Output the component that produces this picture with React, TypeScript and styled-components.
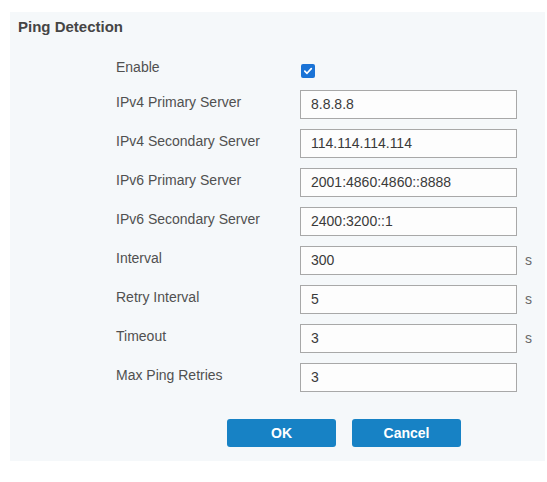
import React from 'react'
import styled, { createGlobalStyle } from 'styled-components'

const GlobalStyle = createGlobalStyle`
  body {
    margin      : 0;
    background  : #ffffff;
    font-family : "Liberation Sans", Arial, sans-serif;
  }
`

const Panel = styled.div`
  margin     : 12px 2px 0 10px;
  width      : 535px;
  background : #f5f8fa;
  padding    : 5px 0 14px 0;
  box-sizing : border-box;
`

const Title = styled.div`
  padding     : 0 8px;
  font-size   : 15px;
  line-height : 20px;
  font-weight : bold;
  color       : #454545;
`

const Form = styled.div`
  display        : flex;
  flex-direction : column;
  gap            : 10px;
  padding        : 18px 0 0 106px;
`

const Row = styled.div<{ $tall?: boolean }>`
  display     : flex;
  align-items : flex-start;
  height      : ${ (p) => (p.$tall ? '25px' : '29px') };
`

const Label = styled.div`
  width       : 184px;
  padding-top : 2px;
  font-size   : 14px;
  line-height : 20px;
  color       : #505050;
`

const Field = styled.div`
  width      : 217px;
  height     : 29px;
  box-sizing : border-box;
  border     : 1px solid #a8a8a8;
  background : #fdfdfd;
  padding    : 0 10px;
  font-size  : 14px;
  line-height: 27px;
  color      : #3a3a3a;
`

const Unit = styled.span`
  margin-left : 8px;
  font-size   : 14px;
  line-height : 29px;
  color       : #6a6a6a;
`

const Check = styled.span`
  display         : flex;
  align-items     : center;
  justify-content : center;
  margin          : 9px 0 0 1px;
  width           : 14px;
  height          : 14px;
  border-radius   : 2px;
  background      : #1a73d6;
`

const Buttons = styled.div`
  display     : flex;
  gap         : 16px;
  padding     : 27px 0 0 217px;
`

const ActionButton = styled.button`
  width         : 109px;
  height        : 28px;
  border        : none;
  border-radius : 3px;
  background    : #1782c5;
  color         : #ffffff;
  font-family   : "Liberation Sans", Arial, sans-serif;
  font-size     : 14px;
  font-weight   : bold;
  cursor        : pointer;
`

const fields: { label: string, value: string, unit?: string }[] = [
  { label: 'IPv4 Primary Server',   value: '8.8.8.8' },
  { label: 'IPv4 Secondary Server', value: '114.114.114.114' },
  { label: 'IPv6 Primary Server',   value: '2001:4860:4860::8888' },
  { label: 'IPv6 Secondary Server', value: '2400:3200::1' },
  { label: 'Interval',              value: '300', unit: 's' },
  { label: 'Retry Interval',        value: '5',   unit: 's' },
  { label: 'Timeout',               value: '3',   unit: 's' },
  { label: 'Max Ping Retries',      value: '3' },
]

export default function App() {
  return (
    <>
      <GlobalStyle />
      <Panel>
        <Title>Ping Detection</Title>
        <Form>
          <Row $tall>
            <Label>Enable</Label>
            <Check>
              <svg width="10" height="10" viewBox="0 0 10 10">
                <path d="M1.8 5.2 L4 7.3 L8.3 2.6" fill="none" stroke="#fff" strokeWidth="1.7" strokeLinecap="round" strokeLinejoin="round" />
              </svg>
            </Check>
          </Row>
          { fields.map((f) => (
            <Row key={ f.label }>
              <Label>{ f.label }</Label>
              <Field>{ f.value }</Field>
              { f.unit && <Unit>{ f.unit }</Unit> }
            </Row>
          )) }
        </Form>
        <Buttons>
          <ActionButton>OK</ActionButton>
          <ActionButton>Cancel</ActionButton>
        </Buttons>
      </Panel>
    </>
  )
}
